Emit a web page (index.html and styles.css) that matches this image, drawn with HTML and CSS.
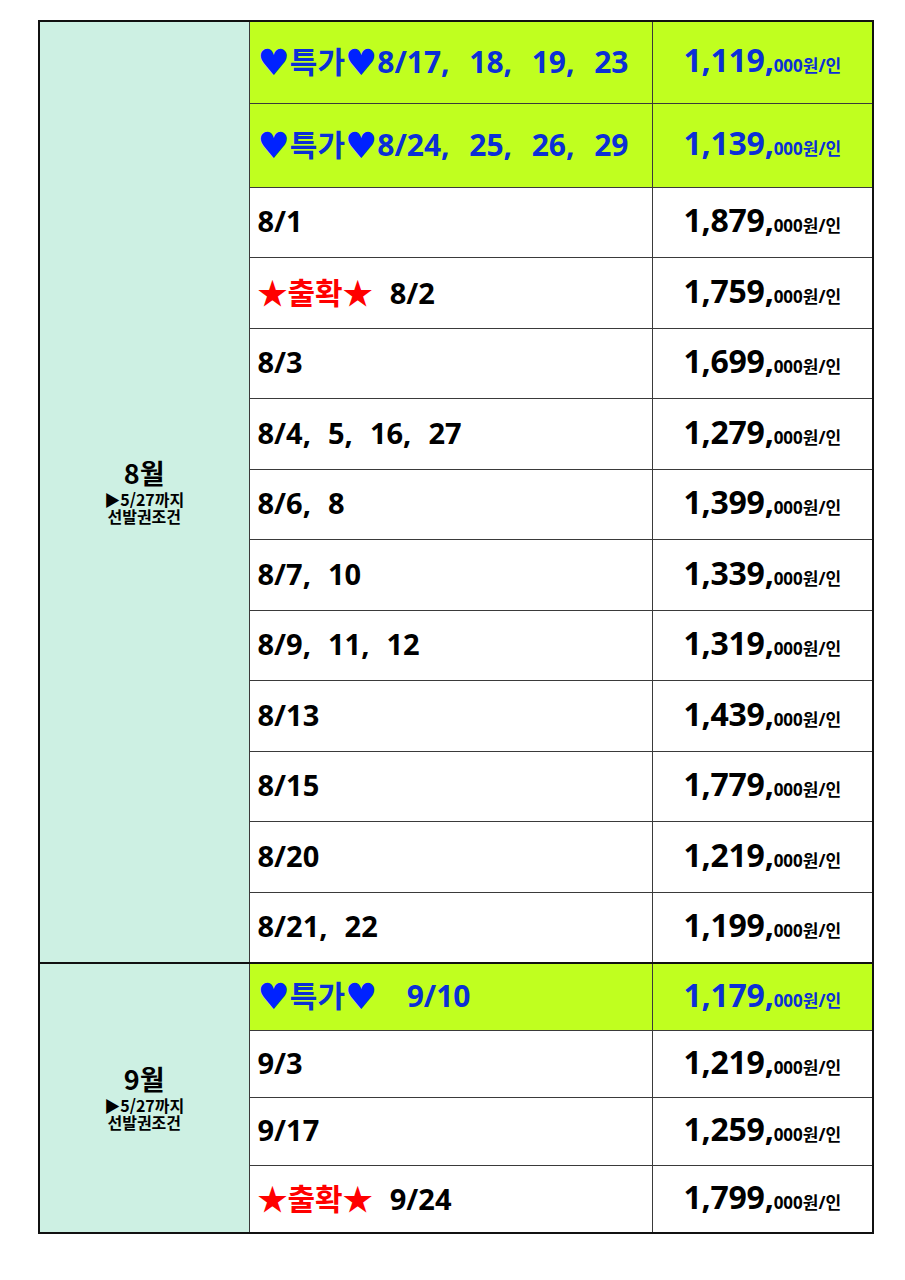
FILE: index.html
```html
<!DOCTYPE html>
<html lang="ko">
<head>
<meta charset="utf-8">
<title>요금표</title>
<link rel="stylesheet" href="styles.css">
</head>
<body>
<div class="page">
<table class="price">
  <colgroup>
    <col class="c-month">
    <col class="c-date">
    <col class="c-price">
  </colgroup>
  <tbody class="grp">
    <tr class="hot h1">
      <td class="month" rowspan="13">
        <div class="m-name">8월</div>
        <div class="m-note">▶5/27까지<br>선발권조건</div>
      </td>
      <td class="date blue"><span class="heart">♥</span>특가<span class="heart">♥</span>8/17,&nbsp; 18,&nbsp; 19,&nbsp; 23</td>
      <td class="amt blue"><span class="big">1,119,</span><span class="small">000원/인</span></td>
    </tr>
    <tr class="hot h2">
      <td class="date blue"><span class="heart">♥</span>특가<span class="heart">♥</span>8/24,&nbsp; 25,&nbsp; 26,&nbsp; 29</td>
      <td class="amt blue"><span class="big">1,139,</span><span class="small">000원/인</span></td>
    </tr>
    <tr class="r8"><td class="date">8/1</td><td class="amt"><span class="big">1,879,</span><span class="small">000원/인</span></td></tr>
    <tr class="r8"><td class="date"><span class="red">★출확★</span>&nbsp; 8/2</td><td class="amt"><span class="big">1,759,</span><span class="small">000원/인</span></td></tr>
    <tr class="r8"><td class="date">8/3</td><td class="amt"><span class="big">1,699,</span><span class="small">000원/인</span></td></tr>
    <tr class="r8"><td class="date">8/4,&nbsp; 5,&nbsp; 16,&nbsp; 27</td><td class="amt"><span class="big">1,279,</span><span class="small">000원/인</span></td></tr>
    <tr class="r8"><td class="date">8/6,&nbsp; 8</td><td class="amt"><span class="big">1,399,</span><span class="small">000원/인</span></td></tr>
    <tr class="r8"><td class="date">8/7,&nbsp; 10</td><td class="amt"><span class="big">1,339,</span><span class="small">000원/인</span></td></tr>
    <tr class="r8"><td class="date">8/9,&nbsp; 11,&nbsp; 12</td><td class="amt"><span class="big">1,319,</span><span class="small">000원/인</span></td></tr>
    <tr class="r8"><td class="date">8/13</td><td class="amt"><span class="big">1,439,</span><span class="small">000원/인</span></td></tr>
    <tr class="r8"><td class="date">8/15</td><td class="amt"><span class="big">1,779,</span><span class="small">000원/인</span></td></tr>
    <tr class="r8"><td class="date">8/20</td><td class="amt"><span class="big">1,219,</span><span class="small">000원/인</span></td></tr>
    <tr class="r8"><td class="date">8/21,&nbsp; 22</td><td class="amt"><span class="big">1,199,</span><span class="small">000원/인</span></td></tr>
  </tbody>
  <tbody class="grp sep">
    <tr class="hot r9">
      <td class="month" rowspan="4">
        <div class="m-name">9월</div>
        <div class="m-note">▶5/27까지<br>선발권조건</div>
      </td>
      <td class="date blue"><span class="heart">♥</span>특가<span class="heart">♥</span>&nbsp;&nbsp; 9/10</td>
      <td class="amt blue"><span class="big">1,179,</span><span class="small">000원/인</span></td>
    </tr>
    <tr class="r9"><td class="date">9/3</td><td class="amt"><span class="big">1,219,</span><span class="small">000원/인</span></td></tr>
    <tr class="r9"><td class="date">9/17</td><td class="amt"><span class="big">1,259,</span><span class="small">000원/인</span></td></tr>
    <tr class="r9"><td class="date"><span class="red">★출확★</span>&nbsp; 9/24</td><td class="amt"><span class="big">1,799,</span><span class="small">000원/인</span></td></tr>
  </tbody>
</table>
</div>
</body>
</html>
```

FILE: styles.css
```css
* { box-sizing: border-box; }
html, body { margin: 0; padding: 0; background: #ffffff; }
body {
  font-family: "Open Sans", "Noto Sans CJK KR", sans-serif;
  color: #000;
}
.page {
  padding: 20px 33px 0 38px;
}
.price {
  width: 834px;
  border-collapse: collapse;
  border: 2px solid #111;
  table-layout: fixed;
}
.c-month { width: 210px; }
.c-date { width: 403px; }
.c-price { width: 221px; }

.price td {
  border: 1px solid #3a3a3a;
  padding: 0;
  vertical-align: middle;
}
.sep tr:first-child td { border-top: 2px solid #111; }

.h1 { height: 82px; }
.h2 { height: 84px; }
.r8 { height: 70.5px; }
.r9 { height: 67.5px; }

.month {
  background: #cdf0e3;
  text-align: center;
  font-family: "Noto Sans CJK KR", sans-serif;
  font-weight: 700;
}
.month .m-name {
  font-size: 27px;
  line-height: 30px;
  margin-bottom: 3px;
}
.month .m-note {
  font-size: 16px;
  line-height: 17px;
  font-weight: 700;
}

.hot td.date, .hot td.amt { background: #c0ff1f; }

.price td.date {
  padding: 0 0 3px 8px;
  font-size: 29px;
  font-weight: 700;
  white-space: nowrap;
  word-spacing: 1px;
}
.price .hot td.date {
  font-size: 30px;
  padding-bottom: 5px;
  word-spacing: 2px;
}
.blue { color: #0b2fd6; }
.heart {
  color: #0022ff;
  font-family: "DejaVu Sans", sans-serif;
  font-size: 36px;
  line-height: 1;
  vertical-align: -2px;
}
.red {
  color: #ff0000;
  font-family: "Noto Sans CJK KR", sans-serif;
  font-size: 30px;
}
.price td.amt {
  padding: 0 0 5px 0;
  text-align: center;
  font-weight: 700;
  white-space: nowrap;
}
.big { font-size: 32px; letter-spacing: -0.2px; }
.small {
  font-size: 17px;
}
```
